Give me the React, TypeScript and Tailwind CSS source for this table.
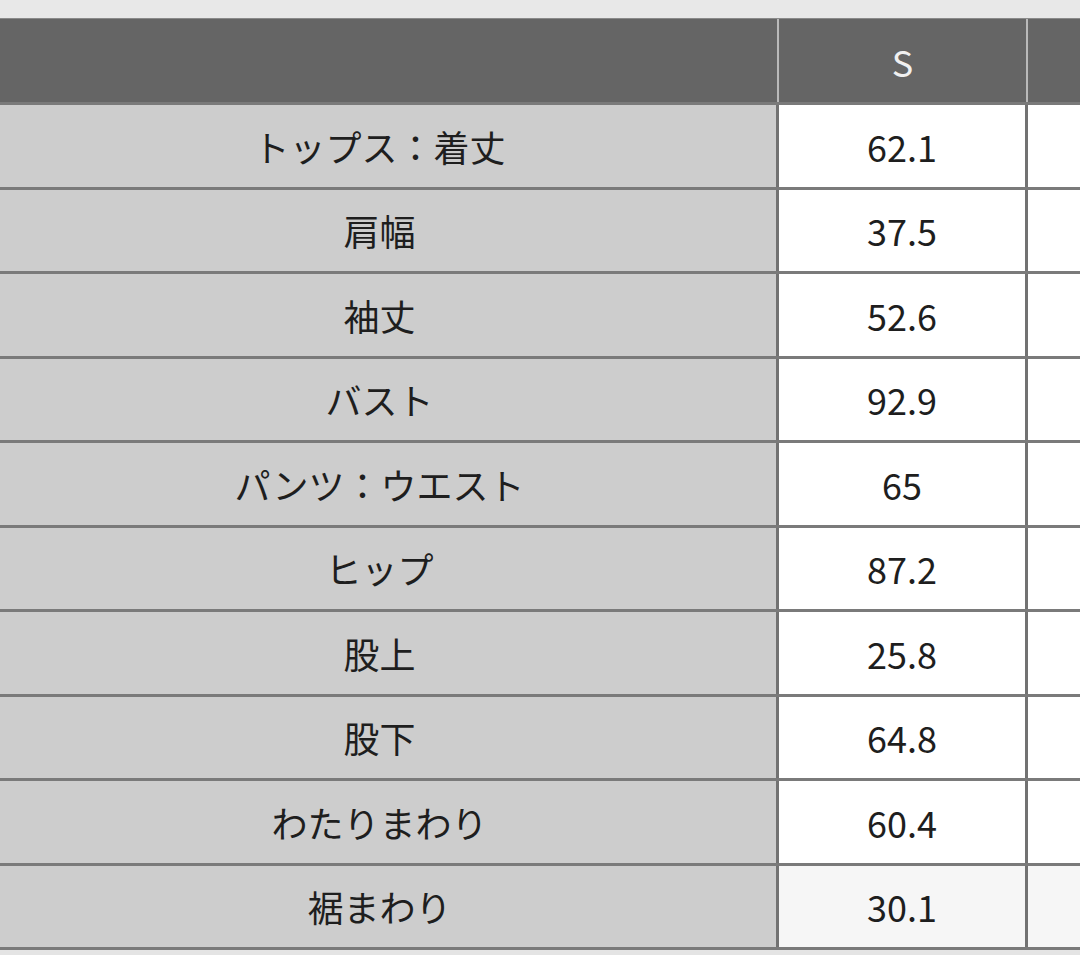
import React from 'react';

const rows: [string, string][] = [
  ['トップス：着丈', '62.1'],
  ['肩幅', '37.5'],
  ['袖丈', '52.6'],
  ['バスト', '92.9'],
  ['パンツ：ウエスト', '65'],
  ['ヒップ', '87.2'],
  ['股上', '25.8'],
  ['股下', '64.8'],
  ['わたりまわり', '60.4'],
  ['裾まわり', '30.1'],
];

export default function App() {
  return (
    <div
      className="w-[1080px] h-[955px] overflow-hidden bg-[#e4e4e4] text-[#1e1e1e]"
      style={{ fontFamily: '"Noto Sans CJK JP", "Noto Sans", sans-serif' }}
    >
      <div className="h-[19px] bg-[#e8e8e8] border-b border-[#8a8a8a]" />

      {/* header */}
      <div className="flex h-[86px] bg-[#656565] border-b-[3px] border-[#7a7a7a]">
        <div className="w-[779px] border-r-[2px] border-[#b9b9b9]" />
        <div className="w-[249px] border-r-[2px] border-[#b9b9b9] flex items-center justify-center text-[36px] text-[#f0f0f0]">
          S
        </div>
        <div className="flex-1" />
      </div>

      {/* body */}
      {rows.map(([label, value], i) => (
        <div key={i} className="flex h-[84.5px] border-b-[3px] border-[#7a7a7a]">
          <div className="w-[779px] pr-[17px] bg-[#cdcdcd] border-r-[3px] border-[#727272] flex items-center justify-center text-[36px] leading-none">
            {label}
          </div>
          <div
            className={`w-[249px] border-r-[3px] border-[#727272] flex items-center justify-center text-[36px] leading-none ${
              i === rows.length - 1 ? 'bg-[#f6f6f6]' : 'bg-white'
            }`}
          >
            {value}
          </div>
          <div className={`flex-1 ${i === rows.length - 1 ? 'bg-[#f6f6f6]' : 'bg-white'}`} />
        </div>
      ))}
    </div>
  );
}
